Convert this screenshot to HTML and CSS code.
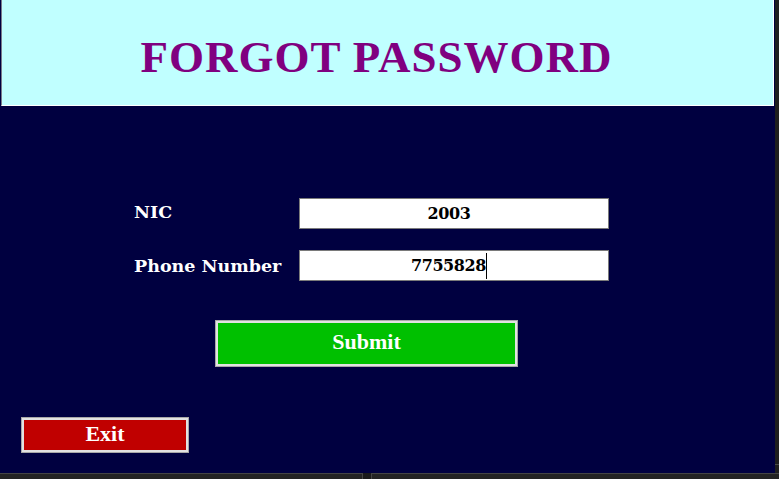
FILE: index.html
```html
<!DOCTYPE html>
<html>
<head>
<meta charset="utf-8">
<title>Forgot Password</title>
<link rel="stylesheet" href="styles.css">
</head>
<body>
<div class="window">
  <div class="main">
    <div class="frame">
      <div class="header">
        <h1 class="title">FORGOT PASSWORD</h1>
      </div>
      <div class="form">
        <div class="label label-nic">NIC</div>
        <div class="field"><span class="value">2003</span></div>
        <div class="label">Phone Number</div>
        <div class="field"><span class="value caret">7755828</span></div>
      </div>
      <div class="btn btn-submit">Submit</div>
      <div class="btn btn-exit">Exit</div>
    </div>
    <div class="vstrip"><div class="vmark"></div></div>
  </div>
  <div class="hbar"><div class="hbar-left"></div><div class="hbar-sep"></div><div class="hbar-right"></div></div>
</div>
</body>
</html>
```
FILE: styles.css
```css
html, body {
  margin: 0;
  padding: 0;
  background: #1f1f1f;
}
.window {
  width: 779px;
  height: 479px;
  display: flex;
  flex-direction: column;
  overflow: hidden;
}
.main {
  display: flex;
  height: 473px;
}
.frame {
  width: 775px;
  height: 473px;
  background: #000040;
  display: flex;
  flex-direction: column;
  align-items: flex-start;
}
.vstrip {
  width: 4px;
  height: 473px;
  background: #1e1e1e;
  display: flex;
  flex-direction: column;
  justify-content: flex-end;
}
.vmark {
  height: 1px;
  background: #4a4a4a;
  margin-bottom: 8px;
}
.hbar {
  height: 6px;
  display: flex;
  background: #232323;
}
.hbar-left {
  width: 362px;
  border-top: 1px solid #444;
  background: #232323;
}
.hbar-sep {
  width: 8px;
  border-left: 1px solid #444;
  border-right: 1px solid #444;
  background: #1a1a1a;
}
.hbar-right {
  flex: 1;
  border-top: 1px solid #444;
  background: #232323;
}
.header {
  margin-left: 1px;
  width: 771px;
  height: 105px;
  background: #c0ffff;
  border-left: 1px solid #7a7a8a;
  border-right: 1px solid #ffffff;
  border-bottom: 1px solid #ffffff;
  display: flex;
  align-items: center;
  justify-content: center;
}
.title {
  margin: 0;
  padding: 10px 22px 0 0;
  font-family: "Liberation Serif", serif;
  font-weight: bold;
  font-size: 45px;
  letter-spacing: 1px;
  color: #800080;
  line-height: 1;
}
.form {
  margin: 92px 0 0 134px;
  display: grid;
  grid-template-columns: 165px 310px;
  grid-auto-rows: 31px;
  row-gap: 21px;
}
.label {
  font-family: "DejaVu Serif", serif;
  font-weight: bold;
  font-size: 17.5px;
  color: #ffffff;
  display: flex;
  align-items: center;
}
.label-nic {
  padding-bottom: 4px;
}
.field {
  box-sizing: border-box;
  background: #ffffff;
  border: 1px solid #7a7a7a;
  display: flex;
  align-items: center;
  justify-content: center;
  padding-right: 10px;
}
.value {
  font-family: "DejaVu Serif", serif;
  font-weight: bold;
  font-size: 16px;
  color: #000000;
  letter-spacing: -0.4px;
  line-height: 26px;
}
.caret {
  border-right: 1px solid #000000;
}
.btn {
  box-sizing: border-box;
  border: 1px solid #a8a8a8;
  box-shadow: inset 0 0 0 2px #e2e2e2;
  font-family: "Liberation Serif", serif;
  font-weight: bold;
  font-size: 22px;
  color: #ffffff;
  display: flex;
  align-items: center;
  justify-content: center;
  padding-bottom: 3px;
}
.btn-submit {
  margin: 39px 0 0 215px;
  width: 303px;
  height: 47px;
  background: #00c000;
}
.btn-exit {
  margin: 50px 0 0 21px;
  width: 168px;
  height: 36px;
  background: #c00000;
}
```
